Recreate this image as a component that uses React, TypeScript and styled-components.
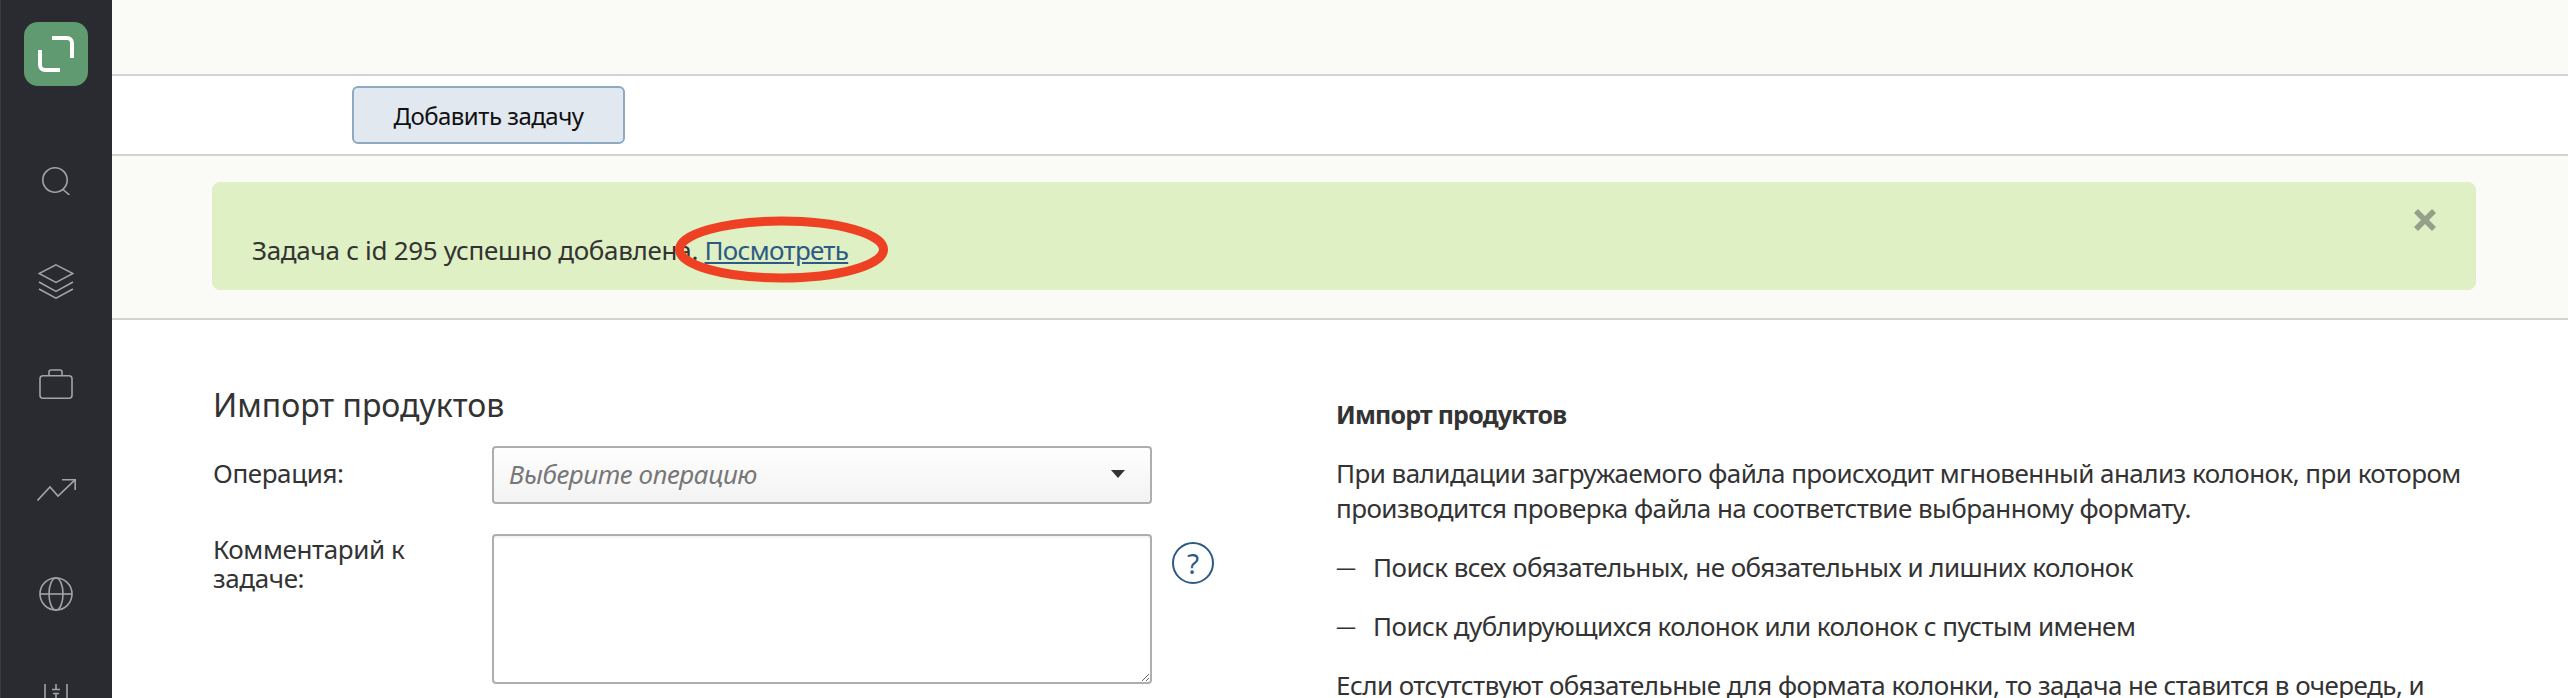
import styled, { createGlobalStyle } from "styled-components";

const Global = createGlobalStyle`
  html, body {
    margin: 0;
    padding: 0;
    height: 100%;
    overflow: hidden;
    background: #fff;
  }
  body {
    font-family: "Noto Sans", "Liberation Sans", sans-serif;
    font-size: 26px;
    letter-spacing: -0.4px;
    color: #333;
  }
`;

function App() {
  return (
    <Page>
      <Global />
      <Sidebar>
        <Logo>
          <svg width="36" height="36" viewBox="0 0 36 36" fill="none" stroke="#fff" strokeWidth="4">
            <path d="M14 2 H29 a5 5 0 0 1 5 5 V22" />
            <path d="M2 14 V29 a5 5 0 0 0 5 5 H22" />
          </svg>
        </Logo>
        <NavItem $gap={81}>
          <svg width="28" height="28" viewBox="0 0 28 28" fill="none" stroke="#a3a4a7" strokeWidth="1.6">
            <circle cx="13" cy="13" r="12.2" />
            <path d="M21 22.5 L27.5 28" />
          </svg>
        </NavItem>
        <NavItem $gap={69}>
          <svg width="36" height="35" viewBox="0 0 36 35" fill="none" stroke="#a3a4a7" strokeWidth="1.5">
            <path d="M18 0.8 L35 9.5 L18 18.5 L1 9.5 Z" />
            <path d="M1 18 L18 27.5 L35 18" />
            <path d="M1 25 L18 34.2 L35 25" />
          </svg>
        </NavItem>
        <NavItem $gap={70}>
          <svg width="34" height="30" viewBox="0 0 34 30" fill="none" stroke="#a3a4a7" strokeWidth="1.6">
            <rect x="1" y="6.8" width="32" height="22.4" rx="3" />
            <path d="M10 7 V3 a2 2 0 0 1 2 -2 h9 a2 2 0 0 1 2 2 V7" />
          </svg>
        </NavItem>
        <NavItem $gap={80}>
          <svg width="39" height="22" viewBox="0 0 39 22" fill="none" stroke="#a3a4a7" strokeWidth="1.6">
            <path d="M0.5 21.5 L13 8 L21 17 L38 0.8" />
            <path d="M25 0.8 H38.2 V11" />
          </svg>
        </NavItem>
        <NavItem $gap={76}>
          <svg width="34" height="34" viewBox="0 0 34 34" fill="none" stroke="#a3a4a7" strokeWidth="1.6">
            <circle cx="17" cy="17" r="16" />
            <ellipse cx="17" cy="17" rx="7" ry="16" />
            <path d="M1 17 H33" />
          </svg>
        </NavItem>
        <NavItem $gap={73}>
          <svg width="24" height="30" viewBox="0 0 24 30" fill="none" stroke="#a3a4a7" strokeWidth="1.6">
            <path d="M1 0 V30 M12 0 V5 M23 0 V30 M8 5.5 H16 M9 9.5 H15 M12 10 V30" />
          </svg>
        </NavItem>
      </Sidebar>

      <Main>
        <TopBand />
        <Toolbar>
          <AddButton type="button">Добавить задачу</AddButton>
        </Toolbar>
        <AlertBand>
          <Alert>
            <AlertText>
              Задача с id 295 успешно добавлена. <AlertLink href="#">Посмотреть</AlertLink>
            </AlertText>
            <Close viewBox="0 0 22 22">
              <path d="M4 0 L11 7 L18 0 L22 4 L15 11 L22 18 L18 22 L11 15 L4 22 L0 18 L7 11 L0 4 Z" />
            </Close>
            <Ring viewBox="0 0 215 67" fill="none">
              <ellipse cx="107.5" cy="33.5" rx="102" ry="28.5" stroke="#ee4023" strokeWidth="9" />
            </Ring>
          </Alert>
        </AlertBand>

        <Content>
          <FormColumn>
            <Title>Импорт продуктов</Title>
            <FormRow>
              <Label $top={13}>Операция:</Label>
              <Select>
                <Placeholder>Выберите операцию</Placeholder>
                <Arrow />
              </Select>
            </FormRow>
            <FormRow>
              <Label $top={1}>Комментарий к задаче:</Label>
              <Textarea />
              <Help>?</Help>
            </FormRow>
          </FormColumn>
          <InfoColumn>
            <InfoTitle>Импорт продуктов</InfoTitle>
            <Paragraph>
              При валидации загружаемого файла происходит мгновенный анализ колонок, при котором
              производится проверка файла на соответствие выбранному формату.
            </Paragraph>
            <Bullet>Поиск всех обязательных, не обязательных и лишних колонок</Bullet>
            <Bullet>Поиск дублирующихся колонок или колонок с пустым именем</Bullet>
            <Paragraph>
              Если отсутствуют обязательные для формата колонки, то задача не ставится в очередь, и
            </Paragraph>
          </InfoColumn>
        </Content>
      </Main>
    </Page>
  );
}

export default App;

const Page = styled.div`
  display: flex;
  width: 2568px;
  height: 698px;
  overflow: hidden;
`;

const Sidebar = styled.nav`
  flex: 0 0 112px;
  box-sizing: border-box;
  background: #2a2b30;
  border-left: 1px solid #3a3b40;
  padding: 22px 1px 0 0;
  display: flex;
  flex-direction: column;
  align-items: center;
`;

const Logo = styled.div`
  flex: none;
  width: 64px;
  height: 64px;
  border-radius: 14px;
  background: #5f9a71;
  display: flex;
  align-items: center;
  justify-content: center;
`;

const NavItem = styled.div<{ $gap: number }>`
  flex: none;
  display: flex;
  justify-content: center;
  margin-top: ${(props) => props.$gap}px;

  svg {
    display: block;
  }
`;

const Main = styled.div`
  flex: 1;
  min-width: 0;
`;

const TopBand = styled.div`
  height: 74px;
  background: #fafbf6;
  border-bottom: 2px solid #d3d3d3;
`;

const Toolbar = styled.div`
  height: 78px;
  display: flex;
  align-items: center;
  padding-left: 240px;
  border-bottom: 2px solid #d3d3d3;
`;

const AddButton = styled.button`
  width: 273px;
  height: 58px;
  box-sizing: border-box;
  background: #e2e8ef;
  border: 2px solid #8ea9c2;
  border-radius: 6px;
  font-family: "Noto Sans", sans-serif;
  font-size: 24px;
  letter-spacing: -0.5px;
  color: #111;
`;

const AlertBand = styled.div`
  background: #fafbf6;
  border-bottom: 2px solid #d3d3d3;
  padding: 26px 92px 28px 100px;
`;

const Alert = styled.div`
  position: relative;
  height: 108px;
  box-sizing: border-box;
  background: #def0c4;
  border-radius: 8px;
  padding: 52px 0 0 40px;
`;

const AlertText = styled.div`
  line-height: 32px;
  letter-spacing: -0.3px;
`;

const AlertLink = styled.a`
  color: #2d5a85;
  text-decoration: underline;
  letter-spacing: -0.7px;
`;

const Close = styled.svg`
  position: absolute;
  top: 27px;
  right: 40px;
  width: 22px;
  height: 22px;
  fill: #95a088;
`;

const Ring = styled.svg`
  position: absolute;
  left: 462px;
  top: 34px;
  width: 215px;
  height: 67px;
`;

const Content = styled.div`
  display: flex;
  padding: 65px 0 0 101px;
`;

const FormColumn = styled.div`
  flex: 0 0 1123px;
`;

const Title = styled.h2`
  margin: 0 0 21px;
  font-size: 32px;
  font-weight: 400;
  letter-spacing: 0;
  line-height: 40px;
`;

const FormRow = styled.div`
  display: flex;
  align-items: flex-start;
  margin-bottom: 30px;
`;

const Label = styled.div<{ $top: number }>`
  flex: 0 0 279px;
  box-sizing: border-box;
  padding: ${(props) => props.$top}px 50px 0 0;
  line-height: 29px;
`;

const Select = styled.div`
  width: 660px;
  height: 58px;
  box-sizing: border-box;
  border: 2px solid #aeaeb0;
  border-radius: 4px;
  background: linear-gradient(#fefefe, #f3f3f3);
  display: flex;
  align-items: center;
  justify-content: space-between;
  padding: 0 25px 2px 15px;
`;

const Placeholder = styled.span`
  font-style: italic;
  color: #777;
`;

const Arrow = styled.span`
  width: 0;
  height: 0;
  border-left: 7px solid transparent;
  border-right: 7px solid transparent;
  border-top: 8px solid #333;
`;

const Textarea = styled.textarea`
  width: 660px;
  height: 150px;
  box-sizing: border-box;
  border: 2px solid #aeaeb0;
  border-radius: 4px;
  background: #fff;
  box-shadow: inset 0 2px 2px rgba(0, 0, 0, 0.05);
  margin: 0;
`;

const Help = styled.div`
  flex: none;
  width: 42px;
  height: 42px;
  box-sizing: border-box;
  margin: 8px 0 0 20px;
  border: 2px solid #2d5a85;
  border-radius: 50%;
  display: flex;
  align-items: center;
  justify-content: center;
  font-size: 28px;
  color: #2d5a85;
`;

const InfoColumn = styled.div`
  width: 1145px;
  line-height: 35px;
  letter-spacing: -0.55px;
  padding-top: 12px;
`;

const InfoTitle = styled.div`
  font-size: 25px;
  font-weight: 700;
  letter-spacing: -0.8px;
  margin-bottom: 24px;
`;

const Paragraph = styled.p`
  margin: 0 0 24px;
`;

const Bullet = styled.div`
  display: flex;
  margin-bottom: 24px;

  &::before {
    content: "—";
    flex: 0 0 37px;
    font-size: 20px;
  }
`;
